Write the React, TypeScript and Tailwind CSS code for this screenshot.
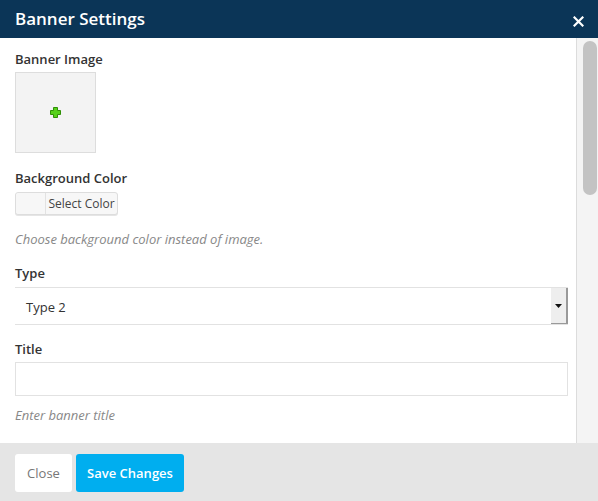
import React from "react";

const font = { fontFamily: '"Open Sans", "Noto Sans", sans-serif' };

const Label = ({ children }: { children: React.ReactNode }) => (
  <div className="text-[13px] leading-5 font-semibold text-[#333]">{children}</div>
);

const Hint = ({ children }: { children: React.ReactNode }) => (
  <div className="text-[13px] leading-5 italic text-[#888]">{children}</div>
);

export default function App() {
  return (
    <div className="w-[598px] h-[501px] flex flex-col bg-white overflow-hidden" style={font}>
      {/* Header */}
      <div className="h-[38px] bg-[#0b3557] flex items-center justify-between pl-[15px] pr-[14px] shrink-0">
        <h1 className="text-[17px] font-semibold text-white">Banner Settings</h1>
        <svg width="11" height="11" viewBox="0 0 11 11" className="mt-[4px]">
          <path d="M1.5 1.5 L9.5 9.5 M9.5 1.5 L1.5 9.5" stroke="#fff" strokeWidth="2.2" strokeLinecap="square" />
        </svg>
      </div>

      {/* Body */}
      <div className="flex flex-1 min-h-0">
        <div className="flex-1 pl-[15px] pr-[8px] pt-[11px] flex flex-col">
          <Label>Banner Image</Label>
          <div className="mt-[3px] w-[81px] h-[81px] bg-[#f3f3f3] border border-[#ddd] flex items-center justify-center">
            <svg width="11" height="11" viewBox="0 0 11 11">
              <path d="M3.5 0.5 h4 v3 h3 v4 h-3 v3 h-4 v-3 h-3 v-4 h3 z" fill="#56d11a" stroke="#2f8f05" strokeWidth="1" />
            </svg>
          </div>

          <div className="mt-[15px]">
            <Label>Background Color</Label>
          </div>
          <div className="mt-[4px] flex w-[103px] h-[23px] border border-[#ddd] rounded-[3px] bg-[#f7f7f7] shadow-[0_1px_0_#e5e5e5]">
            <div className="w-[30px] border-r border-[#e2e2e2] bg-[#f7f7f7] rounded-l-[3px]" />
            <div className="flex-1 flex items-center justify-center text-[12px] text-[#444]">Select Color</div>
          </div>
          <div className="mt-[14px]">
            <Hint>Choose background color instead of image.</Hint>
          </div>

          <div className="mt-[14px]">
            <Label>Type</Label>
          </div>
          <div className="mt-[4px] h-[38px] flex items-stretch border-t border-b border-[#e2e2e2] bg-white">
            <div className="flex-1 flex items-center pl-[11px] pt-[3px] text-[13px] text-[#333]">Type 2</div>
            <div className="w-[17px] bg-[#eeeeee] border-r-2 border-b border-[#999] flex items-center justify-center">
              <svg width="7" height="4" viewBox="0 0 7 4">
                <path d="M0 0 H7 L3.5 4 Z" fill="#111" />
              </svg>
            </div>
          </div>

          <div className="mt-[14px]">
            <Label>Title</Label>
          </div>
          <div className="mt-[3px] h-[34px] border border-[#e2e2e2] bg-white" />
          <div className="mt-[9px]">
            <Hint>Enter banner title</Hint>
          </div>
        </div>

        {/* Scrollbar */}
        <div className="w-[22px] bg-[#f4f4f4] border-l border-[#dcdcdc] pt-[3px] pl-[6px] pr-[1px]">
          <div className="h-[154px] bg-[#c3c3c3] rounded-[8px]" />
        </div>
      </div>

      {/* Footer */}
      <div className="h-[58px] bg-[#e5e5e5] flex items-center gap-[4px] pl-[15px] pt-[1px] shrink-0">
        <button className="h-[38px] w-[57px] pt-[3px] bg-white rounded-[3px] text-[13px] text-[#777]">Close</button>
        <button className="h-[38px] w-[108px] pt-[3px] bg-[#00aeef] rounded-[3px] text-[13px] font-semibold text-white">
          Save Changes
        </button>
      </div>
    </div>
  );
}
